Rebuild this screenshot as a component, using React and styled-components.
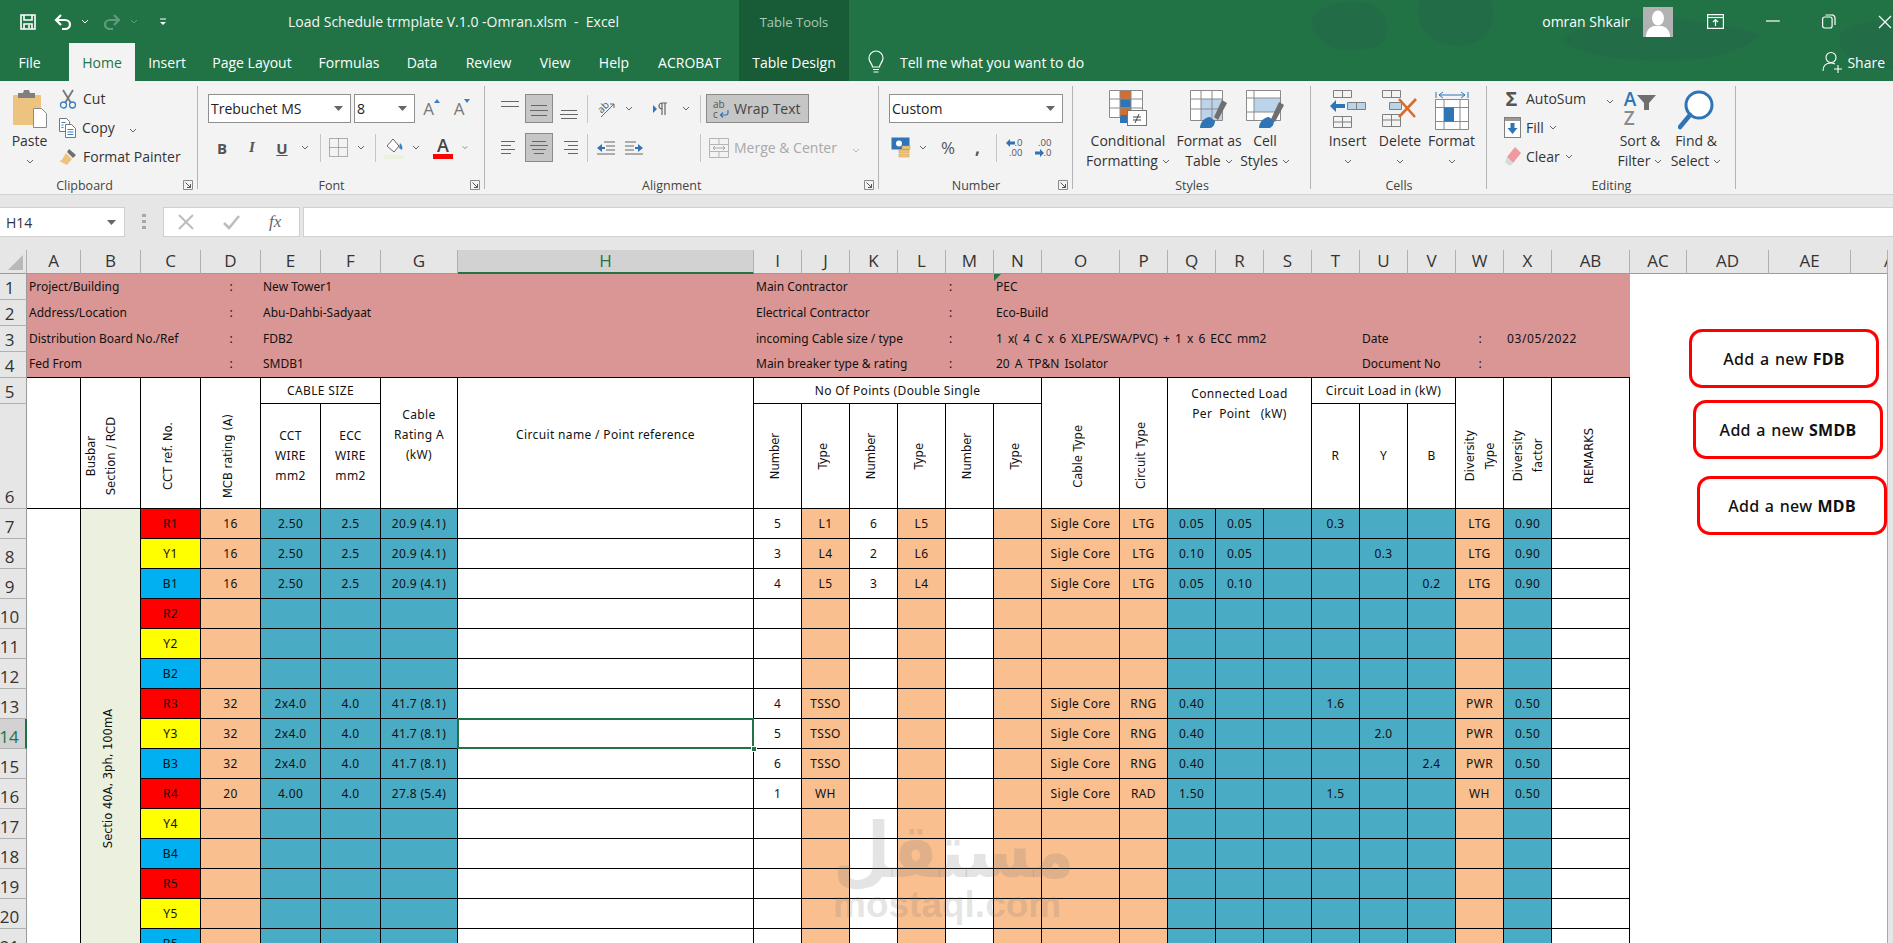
import React from 'react';
import styled, { createGlobalStyle } from 'styled-components';

const UI = '"Open Sans", "Liberation Sans", sans-serif';
const SHEET = '"Noto Sans", "Open Sans", sans-serif';

const Global = createGlobalStyle`
  html, body { margin: 0; padding: 0; background: #e6e6e6; }
  * { box-sizing: border-box; }
`;

const Page = styled.div`
  position: relative;
  width: 1893px;
  height: 943px;
  overflow: hidden;
  font-family: ${UI};
  color: #333;
`;

/* ---------- title bar + tabs ---------- */
const Header = styled.header`
  position: relative;
  display: grid;
  grid-template-columns: 739px 110px 1fr;
  grid-template-rows: 43px 38px;
  background: #217346;
  color: #fff;
  font-size: 14px;
`;
const Pattern = styled.svg`
  position: absolute;
  right: 0;
  top: 0;
`;
const TitleRow = styled.div`
  grid-column: 1;
  grid-row: 1;
  display: flex;
  align-items: center;
  padding-left: 20px;
  position: relative;
`;
const QatGap = styled.div`
  width: ${p => p.$w}px;
  flex: none;
`;
const DocTitle = styled.div`
  white-space: pre;
  font-size: 14px;
  color: #f2f7f4;
`;
const TabBar = styled.nav`
  grid-column: 1;
  grid-row: 2;
  display: flex;
  position: relative;
`;
const Tab = styled.div`
  width: ${p => p.$w}px;
  margin-right: ${p => p.$mr || 0}px;
  display: flex;
  align-items: center;
  justify-content: center;
  white-space: nowrap;
  ${p => p.$on && 'background:#f3f3f3;color:#217346;'}
`;
const Context = styled.div`
  grid-column: 2;
  grid-row: 1 / 3;
  background: #185c37;
  display: grid;
  grid-template-rows: 43px 38px;
  justify-items: center;
  align-items: center;
  position: relative;
`;
const ContextTitle = styled.div`
  color: #a9c9b8;
  font-size: 13px;
`;
const UserRow = styled.div`
  grid-column: 3;
  grid-row: 1;
  display: flex;
  justify-content: flex-end;
  align-items: center;
  padding-right: 1px;
  position: relative;
`;
const UserName = styled.div`
  margin-right: 13px;
`;
const WinGap = styled.div`
  width: ${p => p.$w}px;
`;
const HelpRow = styled.div`
  grid-column: 3;
  grid-row: 2;
  display: flex;
  align-items: center;
  padding: 0 8px 0 17px;
  position: relative;
`;
const TellMe = styled.div`
  margin-left: 14px;
  flex: 1;
`;
const ShareText = styled.div`
  margin-left: 4px;
`;

/* ---------- ribbon ---------- */
const Ribbon = styled.section`
  display: flex;
  height: 114px;
  background: #f3f3f3;
  border-bottom: 1px solid #d2d2d2;
  font-size: 14px;
`;
const Group = styled.div`
  position: relative;
  width: ${p => p.$w}px;
  flex: none;
  display: grid;
  grid-template-rows: 94px 20px;
  &::after {
    content: '';
    position: absolute;
    right: 0;
    top: 5px;
    bottom: 5px;
    width: 1px;
    background: #b4b4b4;
  }
`;
const GroupBody = styled.div`
  display: flex;
  padding-left: ${p => p.$pl || 0}px;
  min-width: 0;
`;
const GroupLabel = styled.div`
  position: relative;
  font-size: 12.5px;
  line-height: 21px;
  text-align: ${p => (p.$left ? 'left' : 'center')};
  padding-left: ${p => p.$pl || 0}px;
  padding-right: ${p => p.$pr || 0}px;
  color: #444;
`;
const Launcher = styled.svg`
  position: absolute;
  right: 5px;
  top: 5px;
`;
const BigBtn = styled.div`
  width: ${p => p.$w}px;
  flex: none;
  padding-top: 9px;
  display: flex;
  flex-direction: column;
  align-items: center;
  line-height: 20px;
  white-space: nowrap;
`;
const BigIcon = styled.div`
  height: 41px;
  display: flex;
  align-items: flex-start;
`;
const ChevLine = styled.div`
  display: flex;
  align-items: center;
  gap: 4px;
  height: 20px;
`;
const Stack = styled.div`
  width: ${p => p.$w}px;
  flex: none;
  padding-top: 3px;
  display: flex;
  flex-direction: column;
`;
const StackRow = styled.div`
  height: 29px;
  display: flex;
  align-items: center;
  gap: ${p => p.$gap || 6}px;
  white-space: nowrap;
`;
const ChevGap = styled.span`
  display: block;
  margin-left: ${p => p.$ml}px;
`;
const Rows = styled.div`
  flex: 1;
  padding-top: 13px;
  display: flex;
  flex-direction: column;
  gap: 10px;
`;
const Row = styled.div`
  display: flex;
  height: 29px;
  align-items: center;
`;
const Field = styled.div`
  width: ${p => p.$w}px;
  height: 29px;
  margin-right: ${p => p.$mr || 0}px;
  flex: none;
  background: #fff;
  border: 1px solid #8f8f8f;
  display: flex;
  align-items: center;
  justify-content: space-between;
  padding: 0 7px 0 2px;
  color: #222;
  font-size: 14px;
`;
const Slot = styled.div`
  width: ${p => p.$w}px;
  height: 29px;
  flex: none;
  display: flex;
  align-items: center;
  justify-content: center;
  font-size: ${p => p.$fs || 14}px;
  font-weight: ${p => p.$fw || 400};
  font-style: ${p => (p.$it ? 'italic' : 'normal')};
  font-family: ${p => p.$ff || 'inherit'};
  color: ${p => p.$c || '#555'};
  text-decoration: ${p => (p.$un ? 'underline' : 'none')};
  ${p => p.$on && 'background:#c6c6c6;border:1px solid #8a8a8a;'}
`;
const Sep = styled.div`
  width: 1px;
  height: 28px;
  background: #c6c6c6;
  margin: 0 ${p => p.$r || 0}px 0 ${p => p.$l || 0}px;
  flex: none;
`;
const WrapBtn = styled.div`
  width: 103px;
  height: 29px;
  flex: none;
  background: #c6c6c6;
  border: 1px solid #8a8a8a;
  display: flex;
  align-items: center;
  gap: 5px;
  padding-left: 6px;
  color: #444;
`;
const Merge = styled.div`
  display: flex;
  align-items: center;
  gap: 5px;
  color: #a8a8a8;
  white-space: nowrap;
`;
const GrowBox = styled.div`
  display: flex;
  align-items: flex-start;
  font-size: 17px;
  line-height: 20px;
  color: #777;
`;
const FontColorBox = styled.div`
  width: 20px;
  display: flex;
  flex-direction: column;
  align-items: center;
  font-size: 18px;
  font-weight: 600;
  line-height: 17px;
  color: #444;
`;
const RedBar = styled.div`
  width: 20px;
  height: 5px;
  background: #f00;
`;
const WrapGlyph = styled.div`
  position: relative;
  width: 16px;
  font-size: 10px;
  line-height: 10px;
  color: #555;
  svg { position: absolute; right: 0; bottom: 0; }
`;

/* ---------- formula bar ---------- */
const FormulaBar = styled.div`
  height: 55px;
  background: #e6e6e6;
  padding: 12px 0 13px;
  display: flex;
`;
const NameBox = styled.div`
  width: 125px;
  background: #fff;
  border: 1px solid #d0d0d0;
  border-left: 0;
  display: flex;
  align-items: center;
  justify-content: space-between;
  padding: 0 8px 0 6px;
  font-size: 14px;
  color: #333;
`;
const Dots = styled.div`
  width: 38px;
  display: flex;
  align-items: center;
  justify-content: center;
`;
const FxBox = styled.div`
  width: 137px;
  background: #fff;
  border: 1px solid #d0d0d0;
  display: flex;
  align-items: center;
  padding-left: 14px;
  gap: 29px;
`;
const FxMark = styled.span`
  font-family: "Liberation Serif", serif;
  font-style: italic;
  font-size: 17px;
  color: #666;
`;
const FormulaInput = styled.div`
  flex: 1;
  margin-left: 3px;
  background: #fff;
  border: 1px solid #d0d0d0;
  border-right: 0;
`;

/* ---------- sheet ---------- */
const COLS = [27, 54, 60, 60, 60, 60, 60, 77, 296, 48, 48, 48, 48, 48, 48, 78, 48, 48, 48, 48, 48, 48, 48, 48, 48, 78, 57, 82, 82, 37];
const LETTERS = 'A B C D E F G H I J K L M N O P Q R S T U V W X AB AC AD AE'.split(' ');

const SheetWrap = styled.div`
  position: relative;
`;
const Sheet = styled.div`
  display: grid;
  grid-template-columns: ${COLS.map(c => c + 'px').join(' ')};
  grid-template-rows: 24px repeat(5, 26px) 105px repeat(18, 30px);
  font-family: ${SHEET};
  font-size: 12px;
  color: #111;
`;
const Corner = styled.div`
  background: #e6e6e6;
  border-right: 1px solid #b0b0b0;
  border-bottom: 1px solid #9b9b9b;
  display: flex;
  align-items: flex-end;
  justify-content: flex-end;
  padding: 0 3px 3px 0;
`;
const ColHead = styled.div`
  background: ${p => (p.$on ? '#d2d2d2' : '#e6e6e6')};
  color: ${p => (p.$on ? '#217346' : '#333')};
  border-right: 1px solid #b0b0b0;
  border-bottom: ${p => (p.$on ? '2px solid #217346' : '1px solid #9b9b9b')};
  ${p => p.$dbl && 'box-shadow: inset 3px 0 0 -1px #e6e6e6, inset 1px 0 0 0 #b0b0b0;'}
  font-family: ${UI};
  font-size: 17px;
  line-height: 22px;
  text-align: ${p => (p.$clip ? 'left' : 'center')};
  padding-left: ${p => (p.$clip ? 33 : 0)}px;
  overflow: hidden;
`;
const RowHead = styled.div`
  background: ${p => (p.$on ? '#d2d2d2' : '#e6e6e6')};
  color: ${p => (p.$on ? '#217346' : '#333')};
  border-right: ${p => (p.$on ? '2px solid #217346' : '1px solid #9b9b9b')};
  border-bottom: 1px solid #b0b0b0;
  font-family: ${UI};
  font-size: 17px;
  line-height: 22px;
  display: flex;
  align-items: flex-end;
  justify-content: center;
  padding-right: 7px;
`;
const Blank = styled.div`
  grid-column: span 4;
  grid-row: span 24;
  background: #fff;
  border-right: 1px solid #a8a8a8;
`;
const Pink = styled.div`
  position: relative;
  grid-column: span ${p => p.$span || 1};
  background: #da9694;
  display: flex;
  align-items: center;
  justify-content: ${p => (p.$center ? 'center' : 'flex-start')};
  padding-left: ${p => (p.$center ? 0 : p.$pl ?? 2)}px;
  padding-bottom: 2px;
  white-space: pre;
  letter-spacing: ${p => p.$ls || 0}px;
  word-spacing: ${p => p.$ws || 0}px;
  ${p => p.$last && 'border-bottom:1px solid #000;'}
  ${p => p.$flag && `&::before{content:'';position:absolute;left:0;top:0;border-style:solid;border-width:7px 7px 0 0;border-color:#217346 transparent transparent transparent;}`}
`;
const Cell = styled.div`
  position: relative;
  grid-column: span ${p => p.$cs || 1};
  grid-row: span ${p => p.$rs || 1};
  background: ${p => p.$bg || '#fff'};
  border-right: 1px solid #000;
  border-bottom: ${p => (p.$open ? '0' : '1px solid #000')};
  display: flex;
  align-items: center;
  justify-content: center;
  text-align: center;
  line-height: 20px;
  letter-spacing: 0.35px;
  padding-top: ${p => p.$pt || 0}px;
  padding-bottom: ${p => p.$pb || 0}px;
  white-space: pre;
  ${p => p.$top && 'align-items:flex-start;padding-top:6px;'}
  ${p => p.$sel && `&::after{content:'';position:absolute;inset:-1px;border:2px solid #217346;z-index:2;}`}
`;
const SelHandle = styled.i`
  position: absolute;
  right: -4px;
  bottom: -4px;
  width: 6px;
  height: 6px;
  background: #217346;
  border: 1px solid #fff;
  z-index: 3;
`;
const VText = styled.div`
  writing-mode: vertical-rl;
  transform: rotate(180deg);
  font-family: "DejaVu Sans", sans-serif;
  font-size: 11.5px;
  line-height: 20px;
  letter-spacing: 0;
  text-align: center;
  white-space: pre;
  margin-left: ${p => p.$ml || 0}px;
`;

/* floating shapes */
const ShapeBtn = styled.div`
  position: absolute;
  left: ${p => p.$x}px;
  top: ${p => p.$y}px;
  width: 190px;
  height: 59px;
  background: #fff;
  border: 3px solid #f00;
  border-radius: 13px;
  display: flex;
  align-items: center;
  justify-content: center;
  font-family: ${SHEET};
  font-size: 16px;
  font-weight: 500;
  letter-spacing: 0.3px;
  color: #111;
  word-spacing: 1px;
  z-index: 4;
  b { font-weight: 700; margin-left: 5px; }
`;
const Watermark = styled.div`
  position: absolute;
  left: 833px;
  top: 568px;
  width: 228px;
  color: rgba(120, 120, 120, 0.2);
  z-index: 5;
  pointer-events: none;
  font-weight: 700;
  text-align: center;
`;
const WmArabic = styled.div`
  font-family: "DejaVu Sans", sans-serif;
  font-size: 66px;
  line-height: 68px;
  padding-right: 14px;
  transform: scaleY(1.15);
  white-space: nowrap;
`;
const WmLatin = styled.div`
  font-family: "Liberation Sans", sans-serif;
  font-size: 37px;
  line-height: 38px;
  white-space: nowrap;
`;

/* ---------- icons ---------- */
const Chev = ({ c = '#666' }) => (
  <svg width="8" height="5" viewBox="0 0 8 5"><path d="M1 1l3 3 3-3" fill="none" stroke={c} strokeWidth="1" /></svg>
);
const Caret = () => (
  <svg width="9" height="5" viewBox="0 0 9 5"><path d="M0 0h9L4.500 5z" fill="#666" /></svg>
);
const Corner3 = () => (
  <Launcher width="10" height="10" viewBox="0 0 10 10">
    <path d="M.5 9.500v-9h9v9z" fill="none" stroke="#8a8a8a" />
    <path d="M2.500 2.500l5 5M7.500 4v3.500H4" fill="none" stroke="#555" />
  </Launcher>
);
const SaveIcon = () => (
  <svg width="16" height="16" viewBox="0 0 16 16" fill="none" stroke="#fff" strokeWidth="1.600">
    <path d="M1 1h14v14H1z" /><path d="M4 1v5h8V1" /><path d="M4 15v-5h8v5" /><path d="M9 11v3" />
  </svg>
);
const UndoIcon = ({ c = '#fff', flip }) => (
  <svg width="19" height="16" viewBox="0 0 19 16" fill="none" stroke={c} strokeWidth="2.200" style={flip ? { transform: 'scaleX(-1)' } : undefined}>
    <path d="M7 1L2 6l5 5" /><path d="M2 6h9a5 4.500 0 0 1 0 9H8" />
  </svg>
);
const Customize = () => (
  <svg width="8" height="8" viewBox="0 0 8 8"><path d="M1 1h6" stroke="#fff" /><path d="M1 4h6L4 7z" fill="#fff" /></svg>
);
const Bulb = () => (
  <svg width="20" height="24" viewBox="0 0 20 24" fill="none" stroke="#fff" strokeWidth="1.200">
    <path d="M6.500 17c0-3-3.500-4.500-3.500-9a7 7 0 0 1 14 0c0 4.500-3.500 6-3.500 9z" /><path d="M7 19.500h6M7.500 22h5" />
  </svg>
);
const Person = () => (
  <svg width="21" height="22" viewBox="0 0 21 22" fill="none" stroke="#fff" strokeWidth="1.100">
    <circle cx="9" cy="6.500" r="5" /><path d="M1 20c0-5 3-8 8-8 2 0 3 .5 4 1" /><path d="M16 14v8M12 18h8" />
  </svg>
);
const Avatar = () => (
  <svg width="30" height="30" viewBox="0 0 30 30">
    <rect width="30" height="30" fill="#b2b2b2" />
    <ellipse cx="15" cy="11" rx="6" ry="7.500" fill="#fff" />
    <path d="M3 30c0-7 4-10 8-11h8c4 1 8 4 8 11z" fill="#fff" />
  </svg>
);
const RibbonOpts = () => (
  <svg width="17" height="15" viewBox="0 0 17 15" fill="none" stroke="#fff" strokeWidth="1.200">
    <path d="M.6.6h15.800v13.800H.6z" /><path d="M.6 3.500h15.800" /><path d="M8.500 12V6M6 8l2.500-2.500L11 8" />
  </svg>
);
const Minimize = () => <svg width="14" height="3" viewBox="0 0 14 3"><path d="M0 1h14" stroke="#fff" strokeWidth="1.200" /></svg>;
const Restore = () => (
  <svg width="14" height="15" viewBox="0 0 14 15" fill="none" stroke="#fff" strokeWidth="1.200">
    <rect x=".6" y="3" width="9.500" height="11" rx="2" /><path d="M3.500 1h6a3 3 0 0 1 3.500 3v7" />
  </svg>
);
const CloseX = () => <svg width="14" height="14" viewBox="0 0 14 14"><path d="M1 1l12 12M13 1L1 13" stroke="#fff" strokeWidth="1.200" /></svg>;

const PasteIcon = () => (
  <svg width="34" height="38" viewBox="0 0 34 38">
    <rect y="5" width="28" height="30" rx="1" fill="#edc47f" />
    <path d="M5 8V3h5l1-3h5l1 3h5v5z" fill="#7f7f7f" />
    <path d="M20.500 18.500h8l5 5v14h-13z" fill="#fff" stroke="#8a8a8a" />
  </svg>
);
const ScissorsIcon = () => (
  <svg width="18" height="20" viewBox="0 0 18 20" fill="none">
    <path d="M4 1l8 13M14 1L6 14" stroke="#777" strokeWidth="1.800" />
    <circle cx="4.500" cy="16" r="3" stroke="#3a7fc1" strokeWidth="1.300" />
    <circle cx="13.500" cy="16" r="3" stroke="#3a7fc1" strokeWidth="1.300" />
  </svg>
);
const CopyIcon = () => (
  <svg width="17" height="20" viewBox="0 0 17 20" fill="#fff" stroke="#777">
    <path d="M.5.500h7l3 3v10H.5z" />
    <path d="M6.500 6.500h6l4 4v9h-10z" />
    <path d="M8.500 11.500h6M8.500 14h6M8.500 16.500h6" stroke="#3a7fc1" />
    <path d="M2.500 4.500h4M2.500 7h2M2.500 9.500h2" stroke="#3a7fc1" />
  </svg>
);
const BrushIcon = () => (
  <svg width="18" height="18" viewBox="0 0 18 18">
    <path d="M10 1l7 6-3 3-6-6z" fill="#6f6f6f" />
    <path d="M7 5l6 6-5 6-8-4c2 0 3-1 4-3z" fill="#edc47f" />
  </svg>
);
const GrowA = ({ up }) => (
  <GrowBox>
    A
    <svg width="6" height="4" viewBox="0 0 6 4"><path d={up ? 'M0 4L3 0l3 4z' : 'M0 0h6L3 4z'} fill="#3a7fc1" /></svg>
  </GrowBox>
);
const BorderIcon = () => (
  <svg width="19" height="19" viewBox="0 0 19 19" fill="none" stroke="#666" strokeDasharray="1 1">
    <path d="M.5.500h18v18H.5zM9.500.500v18M.5 9.500h18" />
  </svg>
);
const FillIcon = () => (
  <svg width="20" height="22" viewBox="0 0 20 22">
    <path d="M3 9l6-7 6 7-5 6z" fill="#fff" stroke="#666" />
    <path d="M16 6c2 2 3 4 2 7-1-1-2-1-3-2z" fill="#3a7fc1" />
    <rect y="18" width="20" height="4" fill="#eaf1dd" />
  </svg>
);
const FontColor = () => (
  <FontColorBox>A<RedBar /></FontColorBox>
);
const LINESETS = {
  top: [[0, 18, 3], [0, 18, 8]],
  mid: [[1, 16, 7], [0, 18, 12], [1, 16, 17]],
  bot: [[1, 16, 12], [0, 18, 16], [1, 16, 20]],
  left: [[0, 14, 4], [0, 10, 8], [0, 14, 12], [0, 10, 16]],
  center: [[2, 14, 4], [0, 18, 8], [2, 14, 12], [4, 10, 16]],
  right: [[4, 14, 4], [8, 10, 8], [4, 14, 12], [8, 10, 16]],
};
const Lines = ({ kind }) => (
  <svg width="18" height="22" viewBox="0 0 18 22" stroke="#666">
    {LINESETS[kind].map(([x, w, y]) => <path key={y} d={`M${x} ${y + 0.5}h${w}`} />)}
  </svg>
);
const Orient = () => (
  <svg width="20" height="20" viewBox="0 0 20 20" overflow="visible">
    <text x="2" y="12" fontSize="10" fontFamily="Open Sans" fill="#555" transform="rotate(-45 7 9)">ab</text>
    <path d="M5 18L18 5M14 5h4v4" fill="none" stroke="#666" />
  </svg>
);
const IndentIcon = ({ flip }) => (
  <svg width="18" height="18" viewBox="0 0 18 18" style={flip ? { transform: 'scaleX(-1)' } : undefined}>
    <path d="M7 3h11M9 7h9M9 11h9M0 15h18" stroke="#666" />
    <path d="M0 9l5-4v3h3v2H5v3z" fill="#2f75b5" />
  </svg>
);
const ParaIcon = () => (
  <svg width="15" height="14" viewBox="0 0 15 14">
    <path d="M0 3l4 4-4 4z" fill="#2f75b5" />
    <path d="M9 13V1h5M12 13V1M9 1a3 3 0 0 0 0 6" fill="none" stroke="#666" strokeWidth="1.200" />
  </svg>
);
const WrapIcon = () => (
  <WrapGlyph>
    ab<br />c
    <svg width="10" height="9" viewBox="0 0 10 9">
      <path d="M9 0v3a2 2 0 0 1-2 2H2M4 2.500L1.500 5 4 7.500" fill="none" stroke="#2f75b5" strokeWidth="1.200" />
    </svg>
  </WrapGlyph>
);
const MergeIcon = () => (
  <svg width="20" height="20" viewBox="0 0 20 20" fill="none" stroke="#b5b5b5">
    <path d="M.5.500h19v19H.5zM.5 6.500h19M.5 13.500h19M10 .5v6M10 13.500v6" />
    <path d="M4 10h12M6 8l-2 2 2 2M14 8l2 2-2 2" stroke="#a8a8a8" />
  </svg>
);
const CurrencyIcon = () => (
  <svg width="20" height="22" viewBox="0 0 20 22">
    <rect x=".5" y=".5" width="18" height="12" fill="#2f75b5" />
    <circle cx="8" cy="6.500" r="3" fill="#fff" />
    <rect x="11" y="9" width="8" height="3" fill="#edc47f" stroke="#c89a4a" strokeWidth=".5" />
    <rect x="8" y="13" width="10" height="3" fill="#edc47f" stroke="#c89a4a" strokeWidth=".5" />
    <rect x="8" y="17" width="10" height="3" fill="#edc47f" stroke="#c89a4a" strokeWidth=".5" />
  </svg>
);
const Decimal = styled.div`
  display: flex;
  flex-direction: column;
  align-items: flex-end;
  font-size: 9.5px;
  line-height: 10px;
  color: #555;
`;
const DecLine = styled.div`
  display: flex;
  align-items: center;
`;
const DecimalIcon = ({ more }) => (
  <Decimal>
    {more ? (
      <>
        <DecLine><svg width="9" height="8" viewBox="0 0 9 8"><path d="M0 4l4-4v2.500h5v3H4V8z" fill="#2f75b5" /></svg>.0</DecLine>
        <DecLine>.00</DecLine>
      </>
    ) : (
      <>
        <DecLine>.00</DecLine>
        <DecLine><svg width="9" height="8" viewBox="0 0 9 8"><path d="M9 4L5 0v2.500H0v3h5V8z" fill="#2f75b5" /></svg>.0</DecLine>
      </>
    )}
  </Decimal>
);
const CondIcon = () => (
  <svg width="38" height="36" viewBox="0 0 38 36">
    <path d="M.5.500h33v27H.5z" fill="#fff" stroke="#8a8a8a" />
    <rect x="11" y="1" width="11" height="8" fill="#d86c2b" />
    <rect x="11" y="9" width="11" height="8" fill="#2f75b5" />
    <rect x="11" y="17" width="11" height="8" fill="#d86c2b" />
    <rect x="11" y="25" width="11" height="8" fill="#2f75b5" />
    <path d="M11 0v27M22 0v27M0 9h33M0 18h33" stroke="#8a8a8a" fill="none" />
    <rect x="18.500" y="20.500" width="19" height="15" fill="#fff" stroke="#777" />
    <path d="M24 27h8M24 30h8M30 24l-4 9" stroke="#444" fill="none" />
  </svg>
);
const TableIcon = () => (
  <svg width="38" height="38" viewBox="0 0 38 38">
    <path d="M.5.500h32v30H.5z" fill="#fff" stroke="#8a8a8a" />
    <rect x="11" y="9" width="21" height="21" fill="#bcd4ea" />
    <path d="M11 0v30M22 0v30M0 9h32M0 19h32" stroke="#8a8a8a" fill="none" />
    <path d="M32 10l5 3-9 17-4-3z" fill="#6f6f6f" />
    <path d="M10 38c0-6 5-11 10-11l5 4c0 3-2 7-5 7z" fill="#2f75b5" />
  </svg>
);
const StylesIcon = () => (
  <svg width="38" height="38" viewBox="0 0 38 38">
    <path d="M.5.500h34v30H.5z" fill="#fff" stroke="#8a8a8a" />
    <rect x="8" y="8" width="26" height="14" fill="#bcd4ea" />
    <path d="M8 0v30M0 8h34M0 22h34" stroke="#8a8a8a" fill="none" />
    <path d="M33 12l5 3-9 17-4-3z" fill="#6f6f6f" />
    <path d="M13 38c0-6 5-11 10-11l5 4c0 3-2 7-5 7z" fill="#2f75b5" />
  </svg>
);
const InsertIcon = () => (
  <svg width="36" height="38" viewBox="0 0 36 38" fill="none" stroke="#7f7f7f">
    <path d="M3.500.500h18v7h-18zM12.500.500v7" />
    <path d="M17.500 12.500h18v7h-18zM26.500 12.500v7" fill="#bcd4ea" />
    <path d="M3.500 26.500h18v11h-18zM12.500 26.500v11M3.500 32h18" />
    <path d="M0 16l6-6v4h9v4H6v4z" fill="#2f75b5" stroke="none" />
  </svg>
);
const DeleteIcon = () => (
  <svg width="36" height="38" viewBox="0 0 36 38" fill="none" stroke="#7f7f7f">
    <path d="M.5.500h18v7H.5zM9.500.500v7" />
    <path d="M7.500 12.500h12v7h-12z" fill="#bcd4ea" />
    <path d="M.5 24.500h18v12H.5zM9.500 24.500v12M.5 30h18" />
    <path d="M17 9l16 18M34 9L17 27" stroke="#d86c2b" strokeWidth="2.600" />
  </svg>
);
const FormatIcon = () => (
  <svg width="34" height="42" viewBox="0 0 34 42" fill="none" stroke="#8a8a8a">
    <path d="M1 2v6M33 2v6" stroke="#2f75b5" />
    <path d="M4 5h26M8 2L4 5l4 3M26 2l4 3-4 3" stroke="#2f75b5" />
    <path d="M.5 9.500h33v30H.5zM9 9.500v30M25 9.500v30M.5 17.500h33M.5 31.500h33" fill="#fff" />
    <rect x="9" y="17.500" width="10" height="14" fill="#2f75b5" stroke="none" />
  </svg>
);
const FillDown = () => (
  <svg width="17" height="21" viewBox="0 0 17 21">
    <rect x=".5" y=".5" width="16" height="20" fill="#fff" stroke="#7f7f7f" />
    <rect x="1" y="1" width="15" height="3" fill="#9a9a9a" />
    <path d="M6.500 6h4v5h3l-5 6-5-6h3z" fill="#2f75b5" />
  </svg>
);
const Eraser = () => (
  <svg width="17" height="19" viewBox="0 0 17 19">
    <path d="M11 0l6 6-8 10-6-6z" fill="#ee9a9e" />
    <path d="M3 10l6 6-3 3-5-4z" fill="#d9d9d9" />
  </svg>
);
const SortLetters = styled.div`
  display: flex;
  flex-direction: column;
  font-size: 19px;
  font-weight: 600;
  line-height: 19px;
  color: #2f75b5;
  span { color: #8a8a8a; }
`;
const SortIcon = () => (
  <>
    <SortLetters>A<span>Z</span></SortLetters>
    <svg width="20" height="20" viewBox="0 0 20 20"><path d="M1 5h19l-7 8v7H8v-7z" fill="#6f6f6f" /></svg>
  </>
);
const FindIcon = () => (
  <svg width="36" height="40" viewBox="0 0 36 40" fill="none">
    <circle cx="21" cy="15" r="13" stroke="#2f75b5" strokeWidth="3" fill="#fff" />
    <path d="M12 25L2 37" stroke="#2f75b5" strokeWidth="4.500" strokeLinecap="round" />
  </svg>
);
const Triangle = () => (
  <svg width="15" height="15" viewBox="0 0 15 15"><path d="M15 0v15H0z" fill="#b8b8b8" /></svg>
);

/* ---------- data ---------- */
const FILL = { R: '#ff0000', Y: '#ffff00', B: '#00b0f0', peach: '#f9bf8f', teal: '#4aabc5' };
const SEQ = ['R', 'Y', 'B'];

const load = (ref, mcb, cct, ecc, rating, i, j, k, l, p, q, r, phase, val, w, x) => ({ ref, mcb, cct, ecc, rating, i, j, k, l, o: 'Sigle Core', p, q, r, phase, val, w, x });
const DATA = {
  R1: load('R1', '16', '2.50', '2.5', '20.9 (4.1)', '5', 'L1', '6', 'L5', 'LTG', '0.05', '0.05', 0, '0.3', 'LTG', '0.90'),
  Y1: load('Y1', '16', '2.50', '2.5', '20.9 (4.1)', '3', 'L4', '2', 'L6', 'LTG', '0.10', '0.05', 1, '0.3', 'LTG', '0.90'),
  B1: load('B1', '16', '2.50', '2.5', '20.9 (4.1)', '4', 'L5', '3', 'L4', 'LTG', '0.05', '0.10', 2, '0.2', 'LTG', '0.90'),
  R3: load('R3', '32', '2x4.0', '4.0', '41.7 (8.1)', '4', 'TSSO', '', '', 'RNG', '0.40', '', 0, '1.6', 'PWR', '0.50'),
  Y3: load('Y3', '32', '2x4.0', '4.0', '41.7 (8.1)', '5', 'TSSO', '', '', 'RNG', '0.40', '', 1, '2.0', 'PWR', '0.50'),
  B3: load('B3', '32', '2x4.0', '4.0', '41.7 (8.1)', '6', 'TSSO', '', '', 'RNG', '0.40', '', 2, '2.4', 'PWR', '0.50'),
  R4: load('R4', '20', '4.00', '4.0', '27.8 (5.4)', '1', 'WH', '', '', 'RAD', '1.50', '', 0, '1.5', 'WH', '0.50'),
};

const BODY_ROWS = Array.from({ length: 18 }, (_, n) => {
  const kind = SEQ[n % 3];
  const ref = kind + (Math.floor(n / 3) + 1);
  return { n: n + 7, kind, ref, d: DATA[ref] || {} };
});

const PINK_ROWS = [
  ['Project/Building', 'New Tower1', 'Main Contractor', 'PEC', '', '', ''],
  ['Address/Location', 'Abu-Dahbi-Sadyaat', 'Electrical Contractor', 'Eco-Build', '', '', ''],
  ['Distribution Board No./Ref', 'FDB2', 'incoming Cable size / type', '1 x( 4 C x 6 XLPE/SWA/PVC) + 1 x 6 ECC mm2', 'Date', ':', '03/05/2022'],
  ['Fed From', 'SMDB1', 'Main breaker type & rating', '20 A TP&N Isolator', 'Document No', ':', ''],
];

const BodyRow = ({ row }) => {
  const { n, kind, ref, d } = row;
  const { peach, teal } = FILL;
  const sel = n === 14;
  return (
    <>
      <RowHead $on={sel}>{n}</RowHead>
      <Cell $open />
      {n === 7 && (
        <Cell $rs={18} $bg="#ebf1de" $open>
          <VText $ml={-6}>{'Sectio 40A, 3ph, 100mA'}</VText>
        </Cell>
      )}
      <Cell $bg={FILL[kind]}>{ref}</Cell>
      <Cell $bg={peach}>{d.mcb}</Cell>
      <Cell $bg={teal}>{d.cct}</Cell>
      <Cell $bg={teal}>{d.ecc}</Cell>
      <Cell $bg={teal}>{d.rating}</Cell>
      <Cell $sel={sel}>{sel && <SelHandle />}</Cell>
      <Cell>{d.i}</Cell>
      <Cell $bg={peach}>{d.j}</Cell>
      <Cell>{d.k}</Cell>
      <Cell $bg={peach}>{d.l}</Cell>
      <Cell />
      <Cell $bg={peach} />
      <Cell $bg={peach}>{d.o}</Cell>
      <Cell $bg={peach}>{d.p}</Cell>
      <Cell $bg={teal}>{d.q}</Cell>
      <Cell $bg={teal}>{d.r}</Cell>
      <Cell $bg={teal} />
      <Cell $bg={teal}>{d.phase === 0 && d.val}</Cell>
      <Cell $bg={teal}>{d.phase === 1 && d.val}</Cell>
      <Cell $bg={teal}>{d.phase === 2 && d.val}</Cell>
      <Cell $bg={peach}>{d.w}</Cell>
      <Cell $bg={teal}>{d.x}</Cell>
      <Cell />
    </>
  );
};

const App = () => (
  <Page>
    <Global />
    <Header>
      <Pattern width="613" height="81" viewBox="0 0 613 81">
        <path d="M32 18C40 4 70-2 90 4c14 5 22 20 16 34-8 12-20 10-30 12-20 4-48-12-44-32zM140 0h70c8 18 0 40-20 44-30 8-60-14-50-44zM280 40c40-26 110-30 200-6-20 22-60 28-110 26-30 0-70-4-90-20zM560 35c16-16 40-16 53-10v45c-24 0-56-10-53-35z" fill="#226d48" />
      </Pattern>
      <TitleRow>
        <SaveIcon />
        <QatGap $w={18} />
        <UndoIcon />
        <QatGap $w={8} />
        <Chev c="#fff" />
        <QatGap $w={13} />
        <UndoIcon c="#5f9c7d" flip />
        <QatGap $w={9} />
        <Chev c="#5f9c7d" />
        <QatGap $w={21} />
        <Customize />
        <QatGap $w={121} />
        <DocTitle>{'Load Schedule trmplate V.1.0 -Omran.xlsm  -  Excel'}</DocTitle>
      </TitleRow>
      <TabBar>
        <Tab $w={59} $mr={10}>File</Tab>
        <Tab $w={66} $on>Home</Tab>
        <Tab $w={64}>Insert</Tab>
        <Tab $w={106}>Page Layout</Tab>
        <Tab $w={88}>Formulas</Tab>
        <Tab $w={58}>Data</Tab>
        <Tab $w={75}>Review</Tab>
        <Tab $w={58}>View</Tab>
        <Tab $w={60}>Help</Tab>
        <Tab $w={91}>ACROBAT</Tab>
      </TabBar>
      <Context>
        <ContextTitle>Table Tools</ContextTitle>
        <div>Table Design</div>
      </Context>
      <UserRow>
        <UserName>omran Shkair</UserName>
        <Avatar />
        <WinGap $w={34} />
        <RibbonOpts />
        <WinGap $w={42} />
        <Minimize />
        <WinGap $w={42} />
        <Restore />
        <WinGap $w={42} />
        <CloseX />
      </UserRow>
      <HelpRow>
        <Bulb />
        <TellMe>Tell me what you want to do</TellMe>
        <Person />
        <ShareText>Share</ShareText>
      </HelpRow>
    </Header>

    <Ribbon>
      <Group $w={198}>
        <GroupBody>
          <BigBtn $w={59}>
            <BigIcon><PasteIcon /></BigIcon>
            <span>Paste</span>
            <ChevLine><Chev /></ChevLine>
          </BigBtn>
          <Stack $w={135}>
            <StackRow><ScissorsIcon /><span>Cut</span></StackRow>
            <StackRow><CopyIcon /><span>Copy</span><ChevGap $ml={8}><Chev /></ChevGap></StackRow>
            <StackRow><BrushIcon /><span>Format Painter</span></StackRow>
          </Stack>
        </GroupBody>
        <GroupLabel $pr={29}>Clipboard<Corner3 /></GroupLabel>
      </Group>

      <Group $w={287}>
        <GroupBody $pl={10}>
          <Rows>
            <Row>
              <Field $w={143} $mr={3}>Trebuchet MS<Caret /></Field>
              <Field $w={61}>8<Caret /></Field>
              <Slot $w={33}><GrowA up /></Slot>
              <Slot $w={28}><GrowA /></Slot>
            </Row>
            <Row>
              <Slot $w={28} $fw={700} $fs={15}>B</Slot>
              <Slot $w={32} $it $fs={15} $fw={600} $ff='"Liberation Serif", serif'>I</Slot>
              <Slot $w={28} $un $fs={15} $fw={700}>U</Slot>
              <Slot $w={18}><Chev /></Slot>
              <Slot $w={12}><Sep /></Slot>
              <Slot $w={24}><BorderIcon /></Slot>
              <Slot $w={22}><Chev /></Slot>
              <Slot $w={7}><Sep /></Slot>
              <Slot $w={29}><FillIcon /></Slot>
              <Slot $w={16}><Chev /></Slot>
              <Slot $w={38}><FontColor /></Slot>
              <Slot $w={6}><Chev /></Slot>
            </Row>
          </Rows>
        </GroupBody>
        <GroupLabel $pr={20}>Font<Corner3 /></GroupLabel>
      </Group>

      <Group $w={394}>
        <GroupBody $pl={10}>
          <Rows>
            <Row>
              <Slot $w={30}><Lines kind="top" /></Slot>
              <Slot $w={28} $on><Lines kind="mid" /></Slot>
              <Slot $w={31}><Lines kind="bot" /></Slot>
              <Sep $l={3} $r={8} />
              <Slot $w={20}><Orient /></Slot>
              <Slot $w={25}><Chev /></Slot>
              <Slot $w={38}><ParaIcon /></Slot>
              <Slot $w={14}><Chev /></Slot>
              <Sep $l={7} $r={5} />
              <WrapBtn><WrapIcon />Wrap Text</WrapBtn>
            </Row>
            <Row>
              <Slot $w={30}><Lines kind="left" /></Slot>
              <Slot $w={28} $on><Lines kind="center" /></Slot>
              <Slot $w={31}><Lines kind="right" /></Slot>
              <Sep $l={3} $r={8} />
              <Slot $w={20}><IndentIcon /></Slot>
              <Slot $w={36}><IndentIcon flip /></Slot>
              <Slot $w={38} />
              <Sep $l={10} $r={8} />
              <Merge><MergeIcon />Merge &amp; Center<ChevGap $ml={10}><Chev c="#b5b5b5" /></ChevGap></Merge>
            </Row>
          </Rows>
        </GroupBody>
        <GroupLabel $left $pl={157}>Alignment<Corner3 /></GroupLabel>
      </Group>

      <Group $w={194}>
        <GroupBody $pl={10}>
          <Rows>
            <Row><Field $w={174}>Custom<Caret /></Field></Row>
            <Row>
              <Slot $w={24}><CurrencyIcon /></Slot>
              <Slot $w={20}><Chev /></Slot>
              <Slot $w={30} $fs={17}>%</Slot>
              <Slot $w={29} $fs={17} $fw={700}>,</Slot>
              <Slot $w={8}><Sep /></Slot>
              <Slot $w={28}><DecimalIcon more /></Slot>
              <Slot $w={30}><DecimalIcon /></Slot>
            </Row>
          </Rows>
        </GroupBody>
        <GroupLabel>Number<Corner3 /></GroupLabel>
      </Group>

      <Group $w={238}>
        <GroupBody>
          <BigBtn $w={110}>
            <BigIcon><CondIcon /></BigIcon>
            <span>Conditional</span>
            <ChevLine>Formatting<Chev /></ChevLine>
          </BigBtn>
          <BigBtn $w={52}>
            <BigIcon><TableIcon /></BigIcon>
            <span>Format as</span>
            <ChevLine>Table<Chev /></ChevLine>
          </BigBtn>
          <BigBtn $w={60}>
            <BigIcon><StylesIcon /></BigIcon>
            <span>Cell</span>
            <ChevLine>Styles<Chev /></ChevLine>
          </BigBtn>
        </GroupBody>
        <GroupLabel>Styles</GroupLabel>
      </Group>

      <Group $w={176}>
        <GroupBody $pl={10}>
          <BigBtn $w={53}>
            <BigIcon><InsertIcon /></BigIcon>
            <span>Insert</span>
            <ChevLine><Chev /></ChevLine>
          </BigBtn>
          <BigBtn $w={52}>
            <BigIcon><DeleteIcon /></BigIcon>
            <span>Delete</span>
            <ChevLine><Chev /></ChevLine>
          </BigBtn>
          <BigBtn $w={51}>
            <BigIcon><FormatIcon /></BigIcon>
            <span>Format</span>
            <ChevLine><Chev /></ChevLine>
          </BigBtn>
        </GroupBody>
        <GroupLabel>Cells</GroupLabel>
      </Group>

      <Group $w={249}>
        <GroupBody $pl={17}>
          <Stack $w={108}>
            <StackRow $gap={7}>
              <Slot $w={15} $fs={20} $fw={700}>Σ</Slot><span>AutoSum</span><ChevGap $ml={13}><Chev /></ChevGap>
            </StackRow>
            <StackRow $gap={5}><FillDown /><span>Fill</span><Chev /></StackRow>
            <StackRow $gap={5}><Eraser /><span>Clear</span><Chev /></StackRow>
          </Stack>
          <BigBtn $w={56}>
            <BigIcon><SortIcon /></BigIcon>
            <span>Sort &amp;</span>
            <ChevLine>Filter<Chev /></ChevLine>
          </BigBtn>
          <BigBtn $w={56}>
            <BigIcon><FindIcon /></BigIcon>
            <span>Find &amp;</span>
            <ChevLine>Select<Chev /></ChevLine>
          </BigBtn>
        </GroupBody>
        <GroupLabel>Editing</GroupLabel>
      </Group>
    </Ribbon>

    <FormulaBar>
      <NameBox>H14<Caret /></NameBox>
      <Dots>
        <svg width="4" height="16" viewBox="0 0 4 16" fill="#a8a8a8">
          <rect width="4" height="3" /><rect y="6" width="4" height="3" /><rect y="12" width="4" height="3" />
        </svg>
      </Dots>
      <FxBox>
        <svg width="16" height="16" viewBox="0 0 16 16"><path d="M1 1l14 14M15 1L1 15" stroke="#bdbdbd" strokeWidth="2" /></svg>
        <svg width="17" height="16" viewBox="0 0 17 16"><path d="M1 9l5 5L16 2" fill="none" stroke="#bdbdbd" strokeWidth="2.600" /></svg>
        <FxMark>fx</FxMark>
      </FxBox>
      <FormulaInput />
    </FormulaBar>

    <SheetWrap>
      <Sheet>
        <Corner><Triangle /></Corner>
        {LETTERS.map(l => (
          <ColHead key={l} $on={l === 'H'} $dbl={l === 'AB'}>{l}</ColHead>
        ))}
        <ColHead $clip>A</ColHead>

        {PINK_ROWS.map((r, i) => (
          <React.Fragment key={r[0]}>
            <RowHead>{i + 1}</RowHead>
            <Pink $span={3} $last={i === 3}>{r[0]}</Pink>
            <Pink $center $last={i === 3}>:</Pink>
            <Pink $span={4} $last={i === 3}>{r[1]}</Pink>
            <Pink $span={4} $last={i === 3}>{r[2]}</Pink>
            <Pink $last={i === 3} $pl={3}>:</Pink>
            <Pink $span={7} $last={i === 3} $flag={i === 0} $ws={2}>{r[3]}</Pink>
            <Pink $span={2} $last={i === 3}>{r[4]}</Pink>
            <Pink $center $last={i === 3}>{r[5]}</Pink>
            <Pink $span={2} $last={i === 3} $pl={3} $ls={0.6}>{r[6]}</Pink>
            {i === 0 && <Blank />}
          </React.Fragment>
        ))}

        <RowHead>5</RowHead>
        <Cell $rs={2} />
        <Cell $rs={2} $pt={26}><VText $ml={-19}>{'Busbar\nSection / RCD'}</VText></Cell>
        <Cell $rs={2} $pt={26}><VText $ml={-6}>CCT ref. No.</VText></Cell>
        <Cell $rs={2} $pt={26}><VText $ml={-5}>MCB rating (A)</VText></Cell>
        <Cell $cs={2}>CABLE SIZE</Cell>
        <Cell $rs={2} $pb={16}>{'Cable\nRating A\n(kW)'}</Cell>
        <Cell $rs={2} $pb={16}>Circuit name / Point reference</Cell>
        <Cell $cs={6}>No Of Points (Double Single</Cell>
        <Cell $rs={2} $pt={26}><VText $ml={-6}>Cable Type</VText></Cell>
        <Cell $rs={2} $pt={26}><VText $ml={-5}>Circuit Type</VText></Cell>
        <Cell $cs={3} $rs={2} $top>{'Connected Load\nPer  Point   (kW)'}</Cell>
        <Cell $cs={3}>Circuit Load in (kW)</Cell>
        <Cell $rs={2} $pt={26}><VText>{'Diversity\nType'}</VText></Cell>
        <Cell $rs={2} $pt={26}><VText>{'Diversity\nfactor'}</VText></Cell>
        <Cell $rs={2} $pt={26}><VText $ml={-4}>REMARKS</VText></Cell>

        <RowHead>6</RowHead>
        <Cell>{'CCT\nWIRE\nmm2'}</Cell>
        <Cell>{'ECC\nWIRE\nmm2'}</Cell>
        {['Number', 'Type', 'Number', 'Type', 'Number', 'Type'].map((t, i) => (
          <Cell key={i}><VText $ml={-5}>{t}</VText></Cell>
        ))}
        <Cell>R</Cell>
        <Cell>Y</Cell>
        <Cell>B</Cell>

        {BODY_ROWS.map(row => <BodyRow key={row.n} row={row} />)}
      </Sheet>

      <ShapeBtn $x={1689} $y={79}>Add a new<b>FDB</b></ShapeBtn>
      <ShapeBtn $x={1693} $y={150}>Add a new<b>SMDB</b></ShapeBtn>
      <ShapeBtn $x={1697} $y={226}>Add a new<b>MDB</b></ShapeBtn>

      <Watermark>
        <WmArabic>مستقل</WmArabic>
        <WmLatin>mostaql.com</WmLatin>
      </Watermark>
    </SheetWrap>
  </Page>
);

export default App;
